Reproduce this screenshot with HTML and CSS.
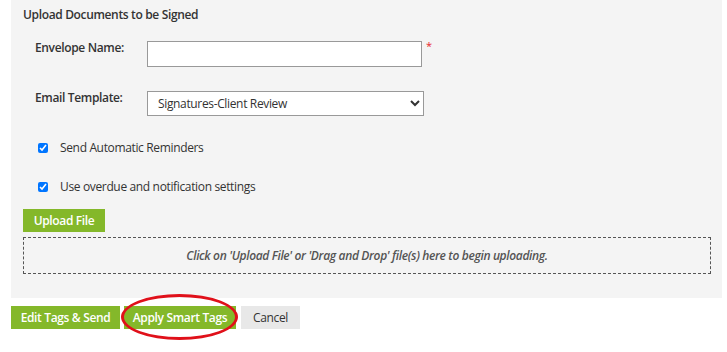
FILE: index.html
```html
<!DOCTYPE html>
<html lang="en">
<head>
    <meta charset="UTF-8">
    <title>Upload Documents to be Signed</title>
    <link rel="stylesheet" href="styles.css">
</head>
<body>
    <div class="panel">
        <h2 class="panel-title">Upload Documents to be Signed</h2>

        <div class="form-row row-name">
            <label class="form-label" for="envName">Envelope Name:</label>
            <input type="text" id="envName" class="text-input">
            <span class="required">*</span>
        </div>

        <div class="form-row row-template">
            <label class="form-label" for="template">Email Template:</label>
            <select id="template" class="select-input">
                <option>Signatures-Client Review</option>
            </select>
        </div>

        <label class="check-row check-first">
            <input type="checkbox" class="check" checked>
            <span>Send Automatic Reminders</span>
        </label>
        <label class="check-row check-second">
            <input type="checkbox" class="check" checked>
            <span>Use overdue and notification settings</span>
        </label>

        <button class="btn btn-upload">Upload File</button>

        <div class="drop-zone">
            Click on 'Upload File' or 'Drag and Drop' file(s) here to begin uploading.
        </div>
    </div>

    <div class="actions">
        <button class="btn">Edit Tags &amp; Send</button>
        <div class="highlight">
            <button class="btn">Apply Smart Tags</button>
            <span class="circle"></span>
        </div>
        <button class="btn btn-cancel">Cancel</button>
    </div>
</body>
</html>
```

FILE: styles.css
```css
* {
    margin: 0;
    padding: 0;
    box-sizing: border-box;
}

html, body {
    height: 100%;
}

body {
    font-family: 'Open Sans', 'Noto Sans', sans-serif;
    font-size: 12px;
    letter-spacing: -0.35px;
    color: #333;
    background: white;
}

.panel {
    margin-left: 11px;
    width: 711px;
    height: 298px;
    background: #f4f4f4;
    padding: 7px 12px 0 12px;
}

.panel-title {
    font-size: 12px;
    font-weight: 600;
    color: #333;
    line-height: 16px;
}

.form-row {
    display: flex;
    align-items: flex-start;
}

.row-name {
    margin-top: 18px;
}

.row-template {
    margin-top: 24px;
}

.form-label {
    width: 124px;
    padding-left: 12px;
    font-weight: 600;
    line-height: 16px;
    margin-top: -1px;
}

.text-input {
    width: 275px;
    height: 26px;
    border: 1px solid #999;
    background: white;
}

.required {
    color: #e8262c;
    font-size: 11px;
    margin-left: 4px;
    line-height: 10px;
}

.select-input {
    width: 277px;
    height: 25px;
    border: 1px solid #999;
    background: white;
    font-family: inherit;
    font-size: 12px;
    letter-spacing: inherit;
    color: #333;
    padding-left: 6px;
}

.check-row {
    display: flex;
    align-items: center;
    gap: 12px;
    padding-left: 15px;
    line-height: 16px;
}

.check-first {
    margin-top: 24px;
}

.check-second {
    margin-top: 23px;
}

.check {
    width: 10px;
    height: 10px;
}

.btn {
    background: #84b82a;
    color: white;
    border: none;
    font-family: inherit;
    font-size: 12px;
    letter-spacing: inherit;
    font-weight: 600;
    height: 23px;
    padding: 0 12px;
    cursor: pointer;
}

.btn-upload {
    display: block;
    width: 82px;
    margin-top: 14px;
    padding: 0;
}

.drop-zone {
    margin-top: 5px;
    width: 688px;
    height: 37px;
    border: 1px dashed #555;
    display: flex;
    align-items: center;
    justify-content: center;
    font-style: italic;
    font-weight: 600;
    color: #555;
}

.actions {
    display: flex;
    align-items: flex-start;
    gap: 4px;
    margin: 8px 0 0 11px;
}

.actions .btn {
    width: 109px;
    padding: 0;
}

.highlight {
    position: relative;
}

.highlight .btn {
    display: block;
    width: 112px;
}

.circle {
    position: absolute;
    left: -3px;
    top: -12px;
    width: 117px;
    height: 46px;
    border: 3px solid #e0101a;
    border-radius: 50%;
}

.actions .btn-cancel {
    width: 59px;
    background: #e8e8e8;
    color: #333;
    font-weight: 400;
    margin-left: 1px;
}
```
